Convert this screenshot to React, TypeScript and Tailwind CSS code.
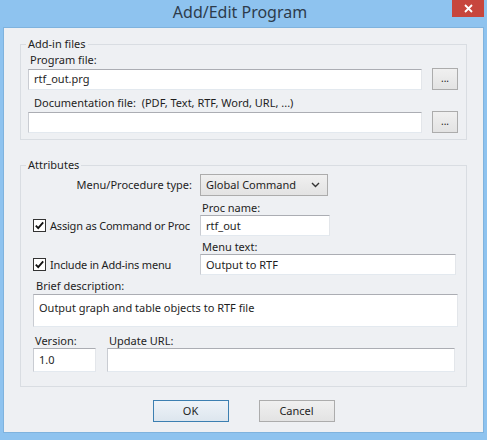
import React from 'react'

const font = { fontFamily: '"Noto Sans", "Open Sans", sans-serif' }

function Field({ value = '', className = '' }: { value?: string; className?: string }) {
  return (
    <div
      className={`flex items-center bg-white border border-t-[#abadb3] border-l-[#c9ccd2] border-r-[#e3e6ea] border-b-[#e3e9ef] pl-[5px] text-[11px] text-[#1e1e1e] ${className}`}
    >
      {value}
    </div>
  )
}

function Check({ label }: { label: string }) {
  return (
    <div className="flex items-center gap-[4px] whitespace-nowrap text-[11px] tracking-[-0.2px] text-[#1e1e1e]">
      <svg width="13" height="13" viewBox="0 0 13 13">
        <rect x="0.5" y="0.5" width="12" height="12" fill="#fff" stroke="#333" />
        <path d="M2.8 6.6 L5.2 9.2 L10.2 3.4" fill="none" stroke="#111" strokeWidth="1.8" />
      </svg>
      <span>{label}</span>
    </div>
  )
}

function BrowseBtn() {
  return (
    <div className="w-[26px] h-[22px] flex items-center justify-center border border-[#acacac] bg-gradient-to-b from-[#f0f0f0] to-[#e3e3e3] text-[10px] text-[#222] leading-none pb-[3px]">
      ...
    </div>
  )
}

export default function App() {
  return (
    <div className="w-[487px] h-[440px] bg-[#8ec3ef] flex flex-col" style={font}>
      {/* Title bar */}
      <div className="h-[27px] flex items-start shrink-0">
        <div className="flex-1 text-center text-[16px] leading-[25px] text-[#2d3b4b] pl-[28px]">Add/Edit Program</div>
        <div className="w-[32px] h-[17px] mr-[3px] bg-[#c7463d] flex items-center justify-center">
          <svg width="9" height="9" viewBox="0 0 9 9">
            <path d="M1 1 L8 8 M8 1 L1 8" stroke="#fff" strokeWidth="1.8" />
          </svg>
        </div>
      </div>

      {/* Client */}
      <div className="mx-[3px] h-[406px] bg-[#eef0f3] border border-[#7fb3de] flex flex-col text-[11px] leading-[16px] text-[#1e1e1e]">
        {/* Add-in files */}
        <fieldset className="mt-[8px] ml-[16px] w-[447px] border border-[#d9dde2] pb-[6px]">
          <legend className="ml-[5px] px-[2px]">Add-in files</legend>
          <div className="pl-[9px]">Program file:</div>
          <div className="flex items-center pl-[7px] gap-[10px]">
            <Field value="rtf_out.prg" className="w-[394px] h-[21px]" />
            <BrowseBtn />
          </div>
          <div className="pl-[13px] mt-[5px] whitespace-pre">Documentation file:  (PDF, Text, RTF, Word, URL, ...)</div>
          <div className="flex items-center pl-[7px] gap-[10px]">
            <Field className="w-[394px] h-[21px]" />
            <BrowseBtn />
          </div>
        </fieldset>

        {/* Attributes */}
        <fieldset className="mt-[17px] ml-[16px] w-[447px] border border-[#d9dde2] pb-[14px]">
          <legend className="ml-[5px] px-[2px]">Attributes</legend>
          <div className="pl-[12px] pr-[8px] flex flex-col">
            <div className="flex items-center gap-[8px] mt-[1px]">
              <div className="w-[159px] text-right">Menu/Procedure type:</div>
              <div className="w-[128px] h-[22px] border border-[#acacac] bg-gradient-to-b from-[#f0f0f0] to-[#e3e3e3] flex items-center justify-between pl-[5px] pr-[7px]">
                <span>Global Command</span>
                <svg width="9" height="6" viewBox="0 0 9 6">
                  <path d="M1 1 L4.5 4.5 L8 1" fill="none" stroke="#333" strokeWidth="1.4" />
                </svg>
              </div>
            </div>

            <div className="flex items-end mt-[4px]">
              <div className="w-[167px] h-[21px] flex items-center">
                <Check label="Assign as Command or Proc" />
              </div>
              <div className="flex flex-col">
                <div className="pl-[2px] h-[15px]">Proc name:</div>
                <Field value="rtf_out" className="w-[130px] h-[21px]" />
              </div>
            </div>

            <div className="flex items-end mt-[3px]">
              <div className="w-[167px] h-[21px] flex items-center">
                <Check label="Include in Add-ins menu" />
              </div>
              <div className="flex flex-col">
                <div className="pl-[2px] h-[15px]">Menu text:</div>
                <Field value="Output to RTF" className="w-[256px] h-[21px]" />
              </div>
            </div>

            <div className="pl-[3px] mt-[3px]">Brief description:</div>
            <Field value="Output graph and table objects to RTF file" className="w-[425px] h-[33px] !items-start pt-[5px]" />

            <div className="flex mt-[6px] gap-[11px]">
              <div className="flex flex-col">
                <div className="pl-[2px] h-[15px]">Version:</div>
                <Field value="1.0" className="w-[63px] h-[24px] border-[#abadb3]" />
              </div>
              <div className="flex flex-col">
                <div className="pl-[2px] h-[15px]">Update URL:</div>
                <Field className="w-[348px] h-[24px]" />
              </div>
            </div>
          </div>
        </fieldset>

        {/* Buttons */}
        <div className="flex justify-center gap-[30px] mt-[13px]">
          <div className="w-[76px] h-[22px] border border-[#3c7fb1] bg-gradient-to-b from-[#eef3f8] to-[#dde6ee] flex items-center justify-center">OK</div>
          <div className="w-[76px] h-[22px] border border-[#acacac] bg-gradient-to-b from-[#f0f0f0] to-[#e3e3e3] flex items-center justify-center">Cancel</div>
        </div>
      </div>
    </div>
  )
}
